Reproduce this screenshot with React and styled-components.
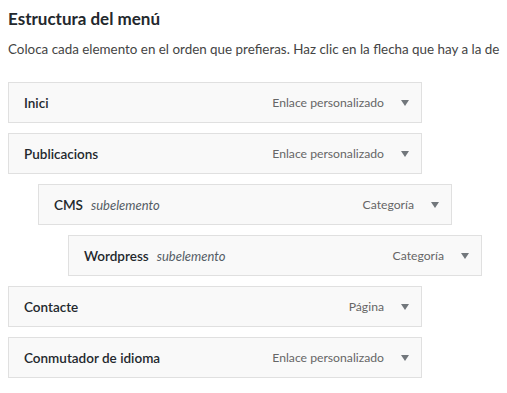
import React from "react";
import styled, { createGlobalStyle } from "styled-components";

const items = [
  { title: "Inici", type: "Enlace personalizado", depth: 0 },
  { title: "Publicacions", type: "Enlace personalizado", depth: 0 },
  { title: "CMS", type: "Categoría", depth: 1, sub: true },
  { title: "Wordpress", type: "Categoría", depth: 2, sub: true },
  { title: "Contacte", type: "Página", depth: 0 },
  { title: "Conmutador de idioma", type: "Enlace personalizado", depth: 0 },
];

const GlobalStyle = createGlobalStyle`
  body {
    margin: 0;
    background: #fff;
    font-family: "Segoe UI", "Lato", "Noto Sans", sans-serif;
    color: #23282d;
    overflow: hidden;
  }
`;

const Page = styled.div`
  padding: 8px 8px 0 8px;
  width: 507px;
  box-sizing: border-box;
`;

const Heading = styled.h3`
  margin: 0;
  font-size: 17px;
  font-weight: 700;
  line-height: 22px;
  color: #23282d;
`;

const Intro = styled.p`
  margin: 10px 0 0;
  font-size: 13.4px;
  line-height: 18px;
  color: #444;
  white-space: nowrap;
`;

const MenuList = styled.ul`
  list-style: none;
  margin: 24px 0 0;
  padding: 0;
  display: flex;
  flex-direction: column;
  gap: 10px;
`;

const Item = styled.li`
  margin-left: ${(p) => p.$depth * 30}px;
  width: 414px;
  height: 41px;
  box-sizing: border-box;
  border: 1px solid #e0e0e0;
  background: #f9f9f9;
  display: flex;
  align-items: center;
  padding: 0 12px 0 15px;
`;

const Title = styled.span`
  font-size: 13.5px;
  font-weight: 600;
  color: #23282d;
`;

const Sub = styled.span`
  margin-left: 8px;
  font-size: 13px;
  font-style: italic;
  color: #555d66;
`;

const Type = styled.span`
  margin-left: auto;
  font-size: 12.2px;
  color: #666;
`;

const Arrow = styled.span`
  margin-left: 17px;
  width: 0;
  height: 0;
  border-left: 4px solid transparent;
  border-right: 4px solid transparent;
  border-top: 6px solid #72777c;
`;

export default function App() {
  return (
    <Page>
      <GlobalStyle />
      <Heading>Estructura del menú</Heading>
      <Intro>
        Coloca cada elemento en el orden que prefieras. Haz clic en la flecha que hay a la de
      </Intro>
      <MenuList>
        {items.map((it) => (
          <Item key={it.title} $depth={it.depth}>
            <Title>{it.title}</Title>
            {it.sub && <Sub>subelemento</Sub>}
            <Type>{it.type}</Type>
            <Arrow />
          </Item>
        ))}
      </MenuList>
    </Page>
  );
}
